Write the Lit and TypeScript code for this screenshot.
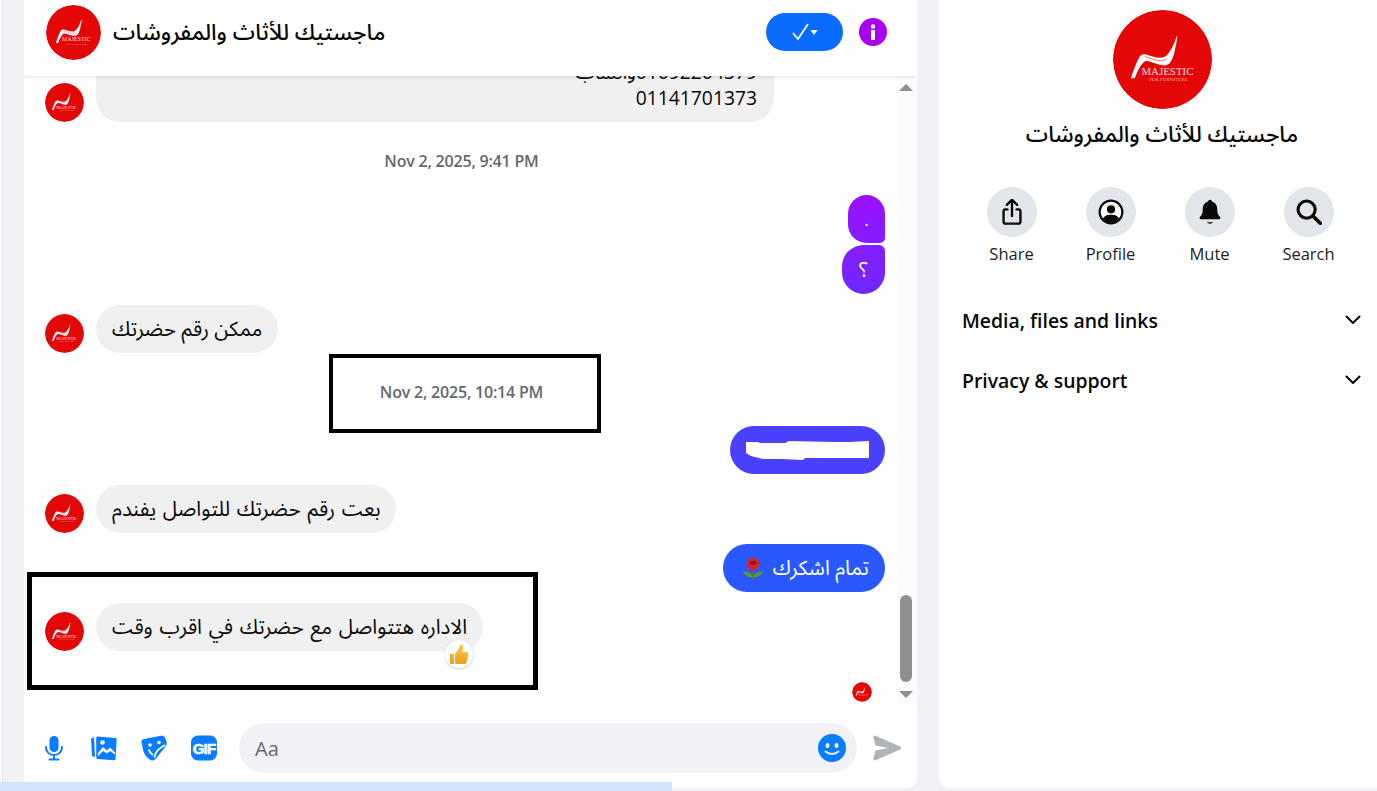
import { LitElement, html, css, svg } from "lit";
import { customElement } from "lit/decorators.js";

const logo = (size: number) => html`<svg class="logo" width=${size} height=${size} viewBox="0 0 100 100" aria-hidden="true">
  <circle cx="50" cy="50" r="50" fill="#e30807"></circle>
  <path d="M65 25C62 33 60 39 55 45 52 49 46 49 40 47 34 45 30 43 27 47 24 52 21 60 18 69L22 69C25 61 28 55 32 52 36 50 45 56 52 56 58 56 60 50 62 43 63 37 65 31 65 25Z" fill="#fff"></path>
  <path d="M32 47C39 49 46 53 54 50" fill="none" stroke="#e86a6a" stroke-width="1"></path>
  <text x="55" y="66" text-anchor="middle" font-family="Liberation Serif,serif" font-size="11" fill="#fbdede">MAJESTIC</text>
  <text x="56" y="72" text-anchor="middle" font-family="Liberation Serif,serif" font-size="5" fill="#f4a9a9">FOR FURNITURE</text>
</svg>`;

const rose = html`<svg width="22" height="24" viewBox="0 0 22 24"><path d="M11 23V11" stroke="#4d7c2f" stroke-width="2"></path><path d="M11 20C7 21 3 19 1 15c4-1 8 0 10 5ZM11 20c4 1 8-1 10-5-4-1-8 0-10 5Z" fill="#5a9a35"></path><circle cx="11" cy="7" r="6.500" fill="#d3252f"></circle><path d="M7 6c2-3 6-3 8 0-2 3-6 3-8 0Z" fill="#9c1520"></path></svg>`;

const thumb = html`<svg width="20" height="21" viewBox="0 0 20 21"><defs><linearGradient id="tg" x1="0" y1="0" x2="0" y2="1"><stop offset="0" stop-color="#fbc94a"></stop><stop offset="1" stop-color="#ee9c1b"></stop></linearGradient></defs><path d="M1 10h4v10H2a1 1 0 0 1-1-1ZM6 10l4-6c.6-1.500 1-3 2-3.500 2-.5 2.500 2 2 4L13 8h4c2 0 2.500 2 2 3.500l-1.500 7c-.4 1.200-1.200 1.500-2.500 1.500H8c-1 0-2-.5-2-1.500Z" fill="url(#tg)"></path></svg>`;

const blurMark = html`<svg width="124" height="19" viewBox="0 0 124 19"><path d="M1 1 12 1 16 2 40 2 44 0 90 1 104 1 124 0V17H60L58 19 36 18 18 18 6 15 1 12Z" fill="#fff"></path></svg>`;

const scaled = (k: number, body: unknown) => svg`<g transform="translate(12 12) scale(${k}) translate(-12 -12)">${body}</g>`;

const icons = {
  share: scaled(1.2, svg`<path d="M12 15V3M8 6.500 12 2.500l4 4M8.500 10H7a1.500 1.500 0 0 0-1.500 1.500v8A1.500 1.500 0 0 0 7 21h10a1.500 1.500 0 0 0 1.500-1.500v-8A1.500 1.500 0 0 0 17 10h-1.500" fill="none" stroke="#080809" stroke-width="1.800" stroke-linecap="round" stroke-linejoin="round"></path>`),
  profile: svg`<circle cx="12" cy="12" r="10.500" fill="#fff" stroke="#080809" stroke-width="2"></circle><circle cx="12" cy="9.500" r="3.800" fill="#080809"></circle><path d="M4.500 18.500C6 15 9 14.500 12 14.500s6 .5 7.500 4C17.500 21 15 22 12 22s-5.500-1-7.500-3.500Z" fill="#080809"></path>`,
  bell: scaled(1.12, svg`<path d="M12 2c1 0 1.500.6 1.600 1.300 3 .9 4.400 3.400 4.400 6.700 0 3.500 1 4.800 2.200 6 .8.900.3 2-.8 2H4.600c-1.100 0-1.600-1.100-.8-2C5 14.800 6 13.500 6 10c0-3.300 1.400-5.800 4.400-6.700C10.500 2.600 11 2 12 2Z" fill="#080809"></path><path d="M9.500 20.500h5c-.6.800-1.500 1.200-2.500 1.200s-1.900-.4-2.500-1.200Z" fill="#080809"></path>`),
  search: scaled(1.1, svg`<circle cx="10" cy="10" r="7.200" fill="none" stroke="#080809" stroke-width="2.600"></circle><path d="M15.500 15.500 21.500 21.500" stroke="#080809" stroke-width="3" stroke-linecap="round"></path>`),
};

@customElement("app-root")
export class AppRoot extends LitElement {
  static styles = css`
    :host { display: block; width: 1377px; height: 791px; overflow: hidden; position: relative; background: #fff; font-family: "Open Sans", "DejaVu Sans", sans-serif; color: #080809; }
    .page { box-sizing: border-box; height: 791px; margin-left: 2px; border-left: 1px solid #e3e4e7; background: #f1f2f6; display: flex; gap: 22px; padding: 0 0 3px 21px; }
    .chat { width: 893px; flex: none; background: #fff; border-radius: 0 0 10px 10px; display: flex; flex-direction: column; overflow: hidden; }
    .head { height: 76px; flex: none; box-sizing: border-box; display: flex; align-items: center; padding: 0 30px 12px 22px; box-shadow: 0 1px 4px rgba(0,0,0,.13); position: relative; z-index: 1; background: #fff; }
    .title { font-family: "Noto Sans Arabic", "DejaVu Sans", sans-serif; font-size: 22.400px; font-weight: 500; margin-left: 12px; padding-top: 2px; white-space: nowrap; }
    .spacer { flex: 1; }
    .logo { display: block; flex: none; border-radius: 50%; }
    .pill { width: 77px; height: 38px; border-radius: 19px; background: #0a6cff; display: flex; align-items: center; justify-content: center; margin-right: 16px; }
    .info { display: block; }
    .body { flex: 1; min-height: 0; display: flex; }
    .list { flex: 1; min-width: 0; overflow: hidden; display: flex; flex-direction: column; justify-content: flex-end; padding: 0 12px 3px 21px; }
    .row { display: flex; align-items: flex-end; gap: 12px; margin-top: 11px; flex: none; }
    .row.me { justify-content: flex-end; }
    .row.tight { margin-top: 2px; }
    .row.first { margin-top: 0; }
    .bubble { font-family: "Noto Sans Arabic", "DejaVu Sans", sans-serif; font-size: 20.500px; word-spacing: 1.400px; line-height: 26px; padding: 12px 16px 10px; border-radius: 24px; background: #f0f0f0; color: #080809; direction: rtl; white-space: nowrap; position: relative; }
    .bubble.short { word-spacing: 0; }
    .me .bubble { color: #fff; background-image: linear-gradient(180deg, #9a11ff 195px, #6f28ff 294px, #4c40ff 450px, #2a58ff 545px); background-attachment: fixed; }
    .wide { width: 678px; box-sizing: border-box; text-align: right; border-radius: 0 0 24px 24px; flex: none; padding: 0 17px 11px; }
    .num { display: block; font-family: "Open Sans", "Noto Sans Arabic", sans-serif; font-size: 19.300px; }
    .dot { width: 37px; box-sizing: border-box; padding: 13px 0 9px; text-align: center; border-radius: 22px 22px 6px 22px; font-size: 17px; }
    .q { width: 43px; height: 49px; box-sizing: border-box; padding: 13px 0 9px; text-align: center; border-radius: 22px 6px 22px 22px; font-size: 20.500px; }
    .time { flex: none; text-align: center; font-size: 16px; line-height: 20px; font-weight: 600; color: #65686c; letter-spacing: -.2px; padding: 29px 0 24px; margin: 0 -12px 0 -19px; }
    .me .bubble.masked { padding: 15px 16px 14px 15px; line-height: 0; background: #4b40ff; }
    .me .bubble.rose { display: flex; align-items: center; gap: 9px; padding: 12px 16px 10px 19px; word-spacing: 0; background: #2a58ff; }
    .react { position: absolute; left: 349px; top: 37px; width: 28px; height: 28px; border-radius: 50%; background: #fff; box-shadow: 0 1px 3px rgba(0,0,0,.2); display: flex; align-items: center; justify-content: center; }
    .seen { display: flex; justify-content: flex-end; margin-top: 31px; padding-right: 13px; flex: none; }
    .bar { width: 18px; flex: none; margin-right: 2px; background: #fbfbfb; display: flex; flex-direction: column; align-items: center; padding: 8px 0 7px; box-sizing: border-box; }
    .arrow { width: 0; height: 0; border: 7px solid transparent; border-top: 0; border-bottom: 7px solid #8f8f8f; }
    .arrow.down { border-bottom: 0; border-top: 7px solid #8f8f8f; margin-top: 9px; }
    .thumb { width: 12px; height: 87px; border-radius: 6px; background: #8f8f8f; margin-top: auto; }
    .composer { height: 83px; flex: none; box-sizing: border-box; display: flex; align-items: center; padding: 3px 16px 0 17px; }
    .tool { width: 26px; height: 26px; margin-right: 24px; display: block; flex: none; }
    .input { flex: 1; height: 50px; border-radius: 25px; background: #f0f2f5; display: flex; align-items: center; justify-content: space-between; padding: 0 11px 0 16px; margin-left: -2px; margin-right: 16px; font-size: 20px; color: #65686c; }
    .side { flex: 1; background: #fff; border-radius: 0 0 0 12px; display: flex; flex-direction: column; align-items: center; padding: 10px 0 0 8px; }
    .name { font-family: "Noto Sans Arabic", "DejaVu Sans", sans-serif; font-size: 22.400px; font-weight: 500; margin-top: 11px; line-height: 30px; white-space: nowrap; }
    .actions { display: flex; margin: 37px 0 0 -4px; }
    .act { width: 99px; display: flex; flex-direction: column; align-items: center; font-size: 16.500px; line-height: 22px; color: #1c1e21; }
    .circle { width: 50px; height: 50px; border-radius: 50%; background: #e2e5e9; display: flex; align-items: center; justify-content: center; margin-bottom: 6px; }
    .secs { align-self: stretch; margin-top: 25px; padding: 0 16px 0 15px; }
    .sec { height: 60px; display: flex; align-items: center; justify-content: space-between; font-size: 19.400px; font-weight: 600; }
    .sec svg { display: block; }
    .mark { position: absolute; border-style: solid; border-color: #000; box-sizing: border-box; pointer-events: none; }
    .m1 { left: 329px; top: 354px; width: 272px; height: 79px; border-width: 4px; }
    .m2 { left: 27px; top: 572px; width: 511px; height: 118px; border-width: 5px; }
    .hbar { position: absolute; left: 0; bottom: 0; width: 672px; height: 9px; background: #d3e3fd; }
  `;

  render() {
    const av = logo(39);
    return html`
      <div class="page">
        <section class="chat">
          <header class="head">
            ${logo(55)}
            <div class="title" dir="rtl">ماجستيك للأثاث والمفروشات</div>
            <div class="spacer"></div>
            <div class="pill"><svg width="26" height="18" viewBox="0 0 26 18"><path d="M1 10l5 6L16 1" fill="none" stroke="#fff" stroke-width="1.700"></path><path d="M18.500 7h7l-3.500 5z" fill="#fff"></path></svg></div>
            <svg class="info" width="28" height="28" viewBox="0 0 28 28"><circle cx="14" cy="14" r="14" fill="#a700ee"></circle><circle cx="14" cy="8.500" r="2.200" fill="#fff"></circle><rect x="12" y="12" width="4" height="10" fill="#fff"></rect></svg>
          </header>
          <div class="body">
            <div class="list">
              <div class="row">
                ${av}
                <div class="bubble wide"><span class="num" dir="ltr"><bdi>واتساب</bdi>01092204379</span><span class="num" dir="ltr">01141701373</span></div>
              </div>
              <div class="time">Nov 2, 2025, 9:41 PM</div>
              <div class="row me first"><div class="bubble dot">.</div></div>
              <div class="row me tight"><div class="bubble q">؟</div></div>
              <div class="row">${av}<div class="bubble short">ممكن رقم حضرتك</div></div>
              <div class="time">Nov 2, 2025, 10:14 PM</div>
              <div class="row me first"><div class="bubble masked">${blurMark}</div></div>
              <div class="row">${av}<div class="bubble">بعت رقم حضرتك للتواصل يفندم</div></div>
              <div class="row me"><div class="bubble rose"><span>تمام اشكرك</span>${rose}</div></div>
              <div class="row">${av}<div class="bubble">الاداره هتتواصل مع حضرتك في اقرب وقت<span class="react" dir="ltr">${thumb}</span></div></div>
              <div class="seen">${logo(20)}</div>
            </div>
            <div class="bar"><span class="arrow"></span><span class="thumb"></span><span class="arrow down"></span></div>
          </div>
          <footer class="composer">
            <svg class="tool" viewBox="0 0 26 26"><rect x="8.500" y="1" width="9" height="16" rx="4.500" fill="#0a7cff"></rect><path d="M5 12c0 5 3.500 8 8 8s8-3 8-8M13 20v4M8.500 24.500h9" fill="none" stroke="#0a7cff" stroke-width="2" stroke-linecap="round"></path></svg>
            <svg class="tool" viewBox="0 0 26 26"><path d="M3 2 L4 22 1 21 0 4Z" fill="#0a7cff"></path><path d="M6.500 1.500 24.500 3c.8.100 1.200.7 1.200 1.500L24.500 24c-.1.800-.7 1.200-1.500 1.200L6.500 24c-.8-.1-1.200-.7-1.200-1.500L5.200 3c.1-.9.600-1.500 1.300-1.500Z" fill="#0a7cff"></path><circle cx="11.500" cy="7.500" r="2.300" fill="#fff"></circle><path d="M7 18l5-6 4 3.500 3-3 5 5 0 2-5-3.500-3 2.500-4-2.500-5 5Z" fill="#fff"></path></svg>
            <svg class="tool" viewBox="0 0 26 26"><path d="M3 4 20 .8c2-.3 3.500.3 4.200 2L25.600 7c.4 1.500 0 3-.8 4.300L15 23.500c-1.500 1.900-3.500 2.500-5.500 1.400C6 23 3.500 20 2.300 16L.5 7.500C.2 5.700 1.200 4.400 3 4Z" fill="#0a7cff"></path><circle cx="9" cy="10" r="1.800" fill="#fff"></circle><circle cx="18" cy="7.500" r="1.800" fill="#fff"></circle><path d="M8 15c.5 2 1.500 3.500 3.500 4.500M13.500 22c1-5 4.500-9 10-11.500" fill="none" stroke="#fff" stroke-width="1.800" stroke-linecap="round"></path></svg>
            <svg class="tool" viewBox="0 0 26 26"><rect width="26" height="25" y=".5" rx="7" fill="#0a7cff"></rect><text x="13" y="18.500" text-anchor="middle" font-family="Liberation Sans,sans-serif" font-weight="700" font-size="15" letter-spacing="-.8" fill="#fff" stroke="#fff" stroke-width=".6">GIF</text></svg>
            <div class="input"><span>Aa</span><svg width="28" height="28" viewBox="0 0 28 28"><circle cx="14" cy="14" r="14" fill="#0a7cff"></circle><ellipse cx="9.500" cy="11.500" rx="2" ry="2.500" fill="#fff"></ellipse><ellipse cx="18.500" cy="11.500" rx="2" ry="2.500" fill="#fff"></ellipse><path d="M7.500 17.500c4 3 9 3 13 0" fill="none" stroke="#fff" stroke-width="1.800" stroke-linecap="round"></path></svg></div>
            <svg width="28" height="26" viewBox="0 0 28 26" style="flex:none"><path d="M2.500 .8 26.500 11.200c1.800.8 1.800 2.800 0 3.600L2.500 25.200c-1.300.5-2.500-.5-2.200-1.800L2.500 15.500 15 13 2.500 10.500.3 2.600C0 1.300 1.200.3 2.500.8Z" fill="#b0b3b8"></path></svg>
          </footer>
        </section>
        <aside class="side">
          ${logo(99)}
          <div class="name" dir="rtl">ماجستيك للأثاث والمفروشات</div>
          <div class="actions">
            ${[["Share", icons.share], ["Profile", icons.profile], ["Mute", icons.bell], ["Search", icons.search]].map(([l, i]) => html`<div class="act"><span class="circle"><svg width="26" height="26" viewBox="0 0 24 24">${i}</svg></span>${l}</div>`)}
          </div>
          <div class="secs">
            ${["Media, files and links", "Privacy & support"].map((t) => html`<div class="sec"><span>${t}</span><svg width="16" height="10" viewBox="0 0 16 10"><path d="M1.500 1.500 8 8l6.500-6.500" fill="none" stroke="#080809" stroke-width="2" stroke-linecap="round" stroke-linejoin="round"></path></svg></div>`)}
          </div>
        </aside>
      </div>
      <div class="mark m1"></div>
      <div class="mark m2"></div>
      <div class="hbar"></div>
    `;
  }
}
